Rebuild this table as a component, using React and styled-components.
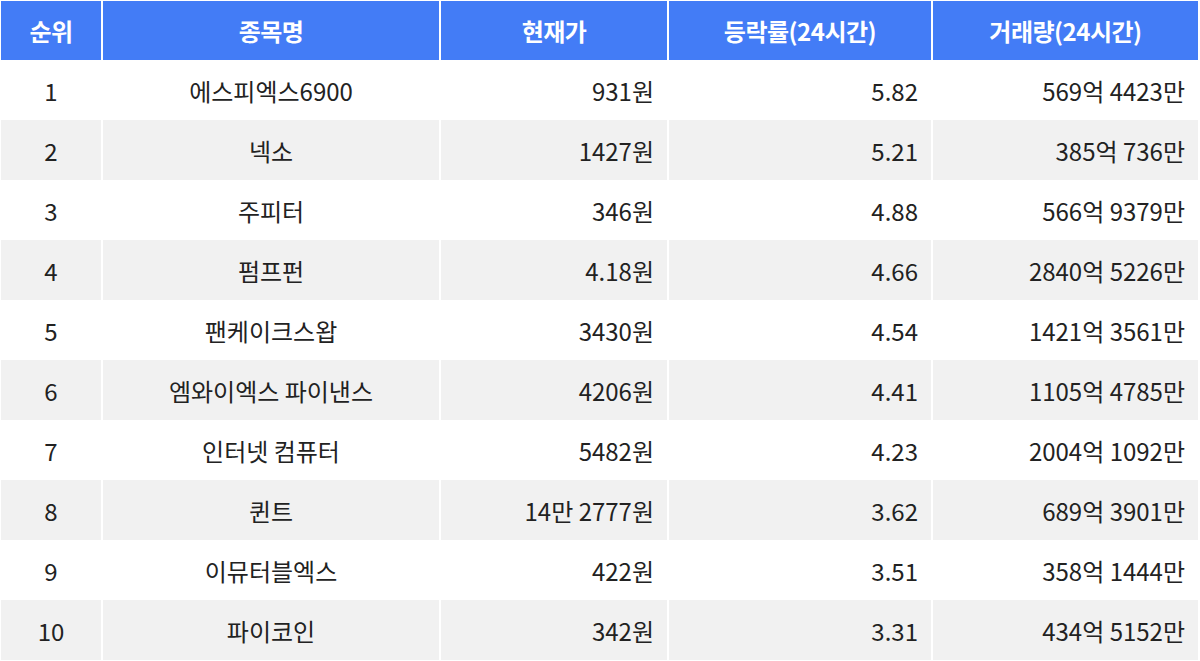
import React from 'react';
import styled, { createGlobalStyle } from 'styled-components';

const GlobalStyle = createGlobalStyle`
  html, body {
    margin: 0;
    padding: 0;
    background: #fff;
  }
  body {
    font-family: "Noto Sans CJK KR", "Noto Sans", sans-serif;
    color: #222;
  }
`;

const rows = [
    ['1', '에스피엑스6900', '931원', '5.82', '569억 4423만'],
    ['2', '넥소', '1427원', '5.21', '385억 736만'],
    ['3', '주피터', '346원', '4.88', '566억 9379만'],
    ['4', '펌프펀', '4.18원', '4.66', '2840억 5226만'],
    ['5', '팬케이크스왑', '3430원', '4.54', '1421억 3561만'],
    ['6', '엠와이엑스 파이낸스', '4206원', '4.41', '1105억 4785만'],
    ['7', '인터넷 컴퓨터', '5482원', '4.23', '2004억 1092만'],
    ['8', '퀸트', '14만 2777원', '3.62', '689억 3901만'],
    ['9', '이뮤터블엑스', '422원', '3.51', '358억 1444만'],
    ['10', '파이코인', '342원', '3.31', '434억 5152만'],
];

const headers = ['순위', '종목명', '현재가', '등락률(24시간)', '거래량(24시간)'];

const App = () => {
    return (
        <>
            <GlobalStyle />
            <Table>
                <Row $head>
                    {headers.map((h) => (
                        <HeadCell key={h}>{h}</HeadCell>
                    ))}
                </Row>
                {rows.map((r, i) => (
                    <Row key={r[0]} $gray={i % 2 === 1}>
                        <Cell>{r[0]}</Cell>
                        <Cell>{r[1]}</Cell>
                        <Cell $right>{r[2]}</Cell>
                        <Cell $right>{r[3]}</Cell>
                        <Cell $right>{r[4]}</Cell>
                    </Row>
                ))}
            </Table>
        </>
    );
};

const Table = styled.div`
    width: 1197px;
    margin: 1px 0 0 1px;
    display: flex;
    flex-direction: column;
`;

const Row = styled.div`
    display: grid;
    grid-template-columns: 100px 336px 226px 262px 265px;
    column-gap: 2px;
    height: ${(p) => (p.$head ? '59px' : '60px')};
    background: #fff;
    > div {
        background: ${(p) => (p.$head ? '#437cf6' : p.$gray ? '#f1f1f1' : '#fff')};
    }
`;

const HeadCell = styled.div`
    display: flex;
    align-items: center;
    justify-content: center;
    color: #fff;
    font-size: 24px;
    font-weight: 700;
    letter-spacing: -0.5px;
    padding-bottom: 1px;
`;

const Cell = styled.div`
    display: flex;
    align-items: center;
    justify-content: ${(p) => (p.$right ? 'flex-end' : 'center')};
    padding-right: ${(p) => (p.$right ? '13px' : '0')};
    font-size: 24px;
    font-weight: 400;
    color: #222;
`;

export default App;
